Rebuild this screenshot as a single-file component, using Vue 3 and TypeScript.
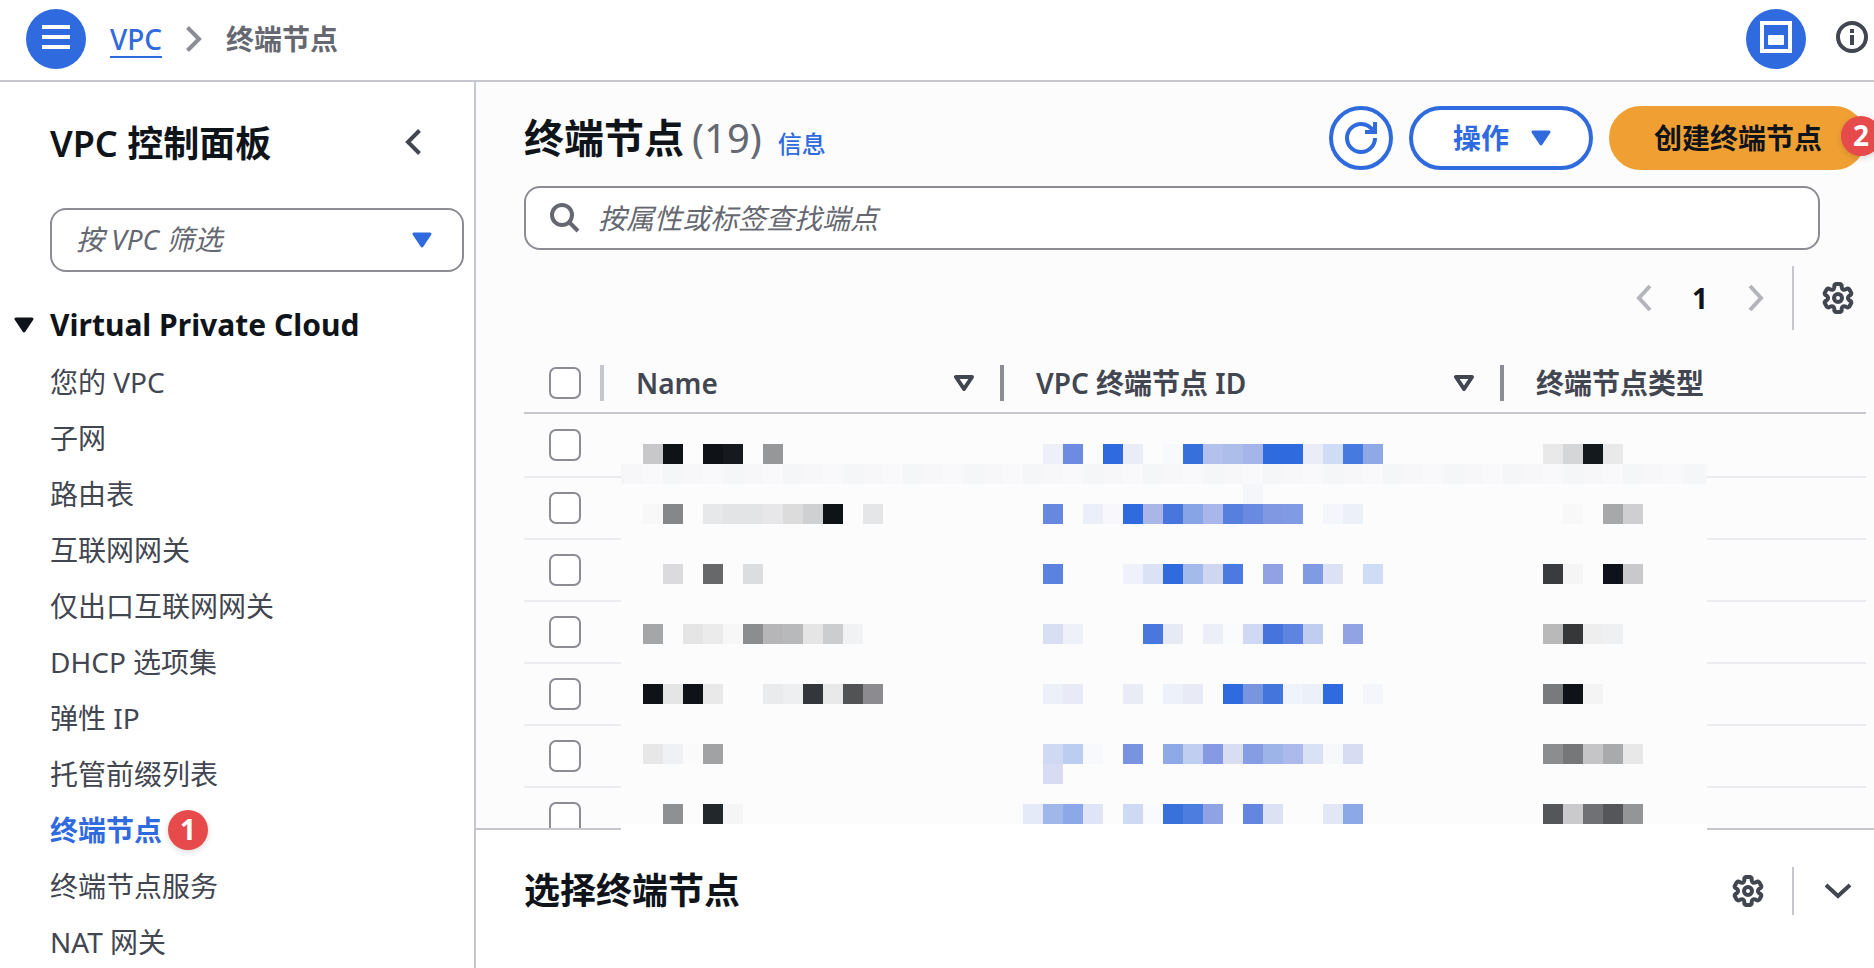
<script setup lang="ts">
import { ref } from 'vue'

interface Block {
  x: number
  y: number
  fill: string
}

const navItems: string[] = [
  '您的 VPC',
  '子网',
  '路由表',
  '互联网网关',
  '仅出口互联网网关',
  'DHCP 选项集',
  '弹性 IP',
  '托管前缀列表',
  '终端节点',
  '终端节点服务',
  'NAT 网关',
]
const activeItem = '终端节点'

const rowCount = 7
const selected = ref<boolean[]>(Array.from({ length: rowCount }, () => false))
const allSelected = ref(false)
const query = ref('')
const vpcFilter = ref('')

// Redacted cell values: [first grid column, grid row, colours ('-' leaves a gap)]
const runs: [number, number, string][] = [
  [0, 0, 'c8c8ca 0f1318 - 0f1318 161a1f - 969799'],
  [0, 3, 'f8f8f8 868788 - e7e8ea e2e4e6 e3e4e6 e7e7e9 dcdcdc cfd0d1 0e1318 - e5e6e8'],
  [1, 6, 'dbdbdd - 676869 - dcddde'],
  [0, 9, 'a5a6a7 - e5e5e5 ebebeb f7f7f7 8c8d8e b6b6b8 b8b9bb e5e5e5 cccdce f1f2f4'],
  [0, 12, '0f1318 e5e5e5 0f1318 e9e9e9 - - eaebed edeff1 33363b e9e9e9 525354 8c8c90'],
  [0, 15, 'e7e7e7 f0f1f4 fafafa a1a2a4'],
  [1, 18, '8f9092 - 22272b f5f5f5'],
  [20, 0, 'edf0f9 6e8be2 - 2f6ade eaedf7 - f7f9fd 376fdb b4c1ec adbeeb a5b5ea 2f6ade 2f6ade eaedf8 cfdcf5 467ade 8fa8e6'],
  [30, 2, 'f4f6fa'],
  [20, 3, '6788df - eaeff9 f8f8fc 2f6ade a9b6e7 4976dc 87a5e6 a9b6e9 567fde 6a8ae1 8098e1 809be4 - f4f6fb ecf0f8'],
  [20, 6, '5c82df - - - eff2fa dce2f5 2f6ade a3baeb cfd7f0 4c7ae0 - 90a2e3 - 809be4 dde1f4 - cfdcf5'],
  [20, 9, 'd9dff2 eef1f9 - - - 4a77dd e6eaf5 - eceef8 fafbfd cfd9f3 4673dc 5d85e0 c0cdef - 91a3e3'],
  [20, 12, 'ecf0f8 e8ebf6 - - e9ebf6 - edf1f9 e8ebf6 - 2f6ade 7a95df 4475dd eff3fc ecf0f8 2f6ade - f5f6fb'],
  [20, 15, 'cfd9f3 bbcdf0 f7f9fd - 7893df - 8fa8e6 c0cff1 8699e3 d9ddf1 859de3 9cb4e8 abbaea d9e1f4 f7f8fc d7dcf3'],
  [20, 16, 'd7dcf3'],
  [19, 18, 'e4eaf7 a0b7ea 8da8e9 dfe5f6 - cedaf3 f8fafd 3871dc 4e7de0 8fa2e4 - 6486df dce1f4 - - e1e7f5 8da8e6'],
  [45, 0, 'e9e9e9 d4d6d8 13191c e9e9e9'],
  [46, 3, 'f8f8f8 - a7a8aa cfcfd1'],
  [45, 6, '3a3b3f f5f5f5 - 0e131b c9c9cb'],
  [45, 9, 'b9b9b9 363738 eeeeee eff0f2'],
  [45, 12, '797a7b 0f1318 f4f4f4'],
  [45, 15, '8c8d8f 767778 c5c5c7 a9aaab e8e8e8'],
  [45, 18, '54565a cacacc 707175 54565a 949596'],
]

const cell = 20
const blocks: Block[] = runs.flatMap(([col, row, colours]) =>
  colours
    .split(' ')
    .map((c, i) => ({ x: 22 + (col + i) * cell, y: 30 + row * cell, fill: c }))
    .filter((b) => b.fill !== '-')
    .map((b) => ({ ...b, fill: '#' + b.fill })),
)

const stripeColours = ['#f9f9fc', '#f5f6f8', '#f7f7f9']
for (let k = -2; k < 54; k++) {
  blocks.push({ x: 22 + k * cell, y: 50, fill: stripeColours[(k + 3) % 3] })
}

// Six-lobed gear outline centred in a 32-unit box
function point(angle: number, radius: number): string {
  const a = (angle * Math.PI) / 180
  return `${(16 + radius * Math.cos(a)).toFixed(2)} ${(16 + radius * Math.sin(a)).toFixed(2)}`
}
const gearPath =
  Array.from({ length: 6 }, (_, i) => {
    const a = -90 + i * 60
    return `${i ? 'L' : 'M'}${point(a - 18, 11.6)}Q${point(a - 17, 14.2)} ${point(a - 8, 14.2)}L${point(a + 8, 14.2)}Q${point(a + 17, 14.2)} ${point(a + 18, 11.6)}Q${point(a + 30, 8.4)} ${point(a + 42, 11.6)}`
  }).join('') + 'Z'
</script>

<template>
  <div class="app">
    <header class="topbar">
      <button class="round" type="button" aria-label="菜单">
        <svg width="28" height="24" viewBox="0 0 28 24" fill="#fff">
          <path d="M0 0h28v4H0zM0 10h28v4H0zM0 20h28v4H0z" />
        </svg>
      </button>
      <nav class="crumbs">
        <a href="#vpc">VPC</a>
        <svg width="16" height="26" viewBox="0 0 16 26" fill="none" stroke="#8c8c94" stroke-width="4">
          <path d="M1.500 1.500L13 13L1.500 24.500" />
        </svg>
        <span>终端节点</span>
      </nav>
      <div class="tools">
        <button class="round" type="button" aria-label="拆分面板">
          <svg width="32" height="32" viewBox="0 0 32 32">
            <rect x="2" y="2" width="28" height="28" fill="none" stroke="#fff" stroke-width="4" />
            <rect x="8" y="14" width="16" height="10" rx="1" fill="#fff" />
          </svg>
        </button>
        <button class="plain about" type="button" aria-label="信息">
          <svg width="32" height="32" viewBox="0 0 32 32">
            <circle cx="16" cy="16" r="14" fill="none" stroke="#424650" stroke-width="4" />
            <path d="M14 8h4v4h-4zM14 14h4v10h-4z" fill="#424650" />
          </svg>
        </button>
      </div>
    </header>

    <div class="body">
      <aside class="sidebar">
        <div class="side-head">
          <h2>VPC 控制面板</h2>
          <button class="plain" type="button" aria-label="收起">
            <svg width="16" height="26" viewBox="0 0 16 26" fill="none" stroke="#424650" stroke-width="4">
              <path d="M14.500 1.500L3 13L14.500 24.500" />
            </svg>
          </button>
        </div>
        <div class="filter">
          <select v-model="vpcFilter" aria-label="按 VPC 筛选">
            <option value="">按 VPC 筛选</option>
          </select>
          <svg class="filter-arrow" width="20" height="16" viewBox="0 0 20 16">
            <path d="M2 2H18L10 14Z" fill="#2f6ade" stroke="#2f6ade" stroke-width="3" stroke-linejoin="round" />
          </svg>
        </div>
        <button class="section" type="button" aria-expanded="true">
          <svg width="20" height="16" viewBox="0 0 20 16">
            <path d="M2 2H18L10 14Z" fill="#0f141a" stroke="#0f141a" stroke-width="3" stroke-linejoin="round" />
          </svg>
          <span>Virtual Private Cloud</span>
        </button>
        <ul class="nav">
          <li v-for="item in navItems" :key="item">
            <a :href="'#' + item" :class="{ active: item === activeItem }">{{ item }}</a>
            <span v-if="item === activeItem" class="badge">1</span>
          </li>
        </ul>
      </aside>

      <main class="workspace">
        <section class="list">
          <div class="title-row">
            <h1>终端节点<span class="count">(19)</span></h1>
            <a class="info" href="#info">信息</a>
            <div class="actions">
              <button class="btn icon-btn" type="button" aria-label="刷新">
                <svg width="32" height="32" viewBox="0 0 32 32" fill="none" stroke="#2f6ade" stroke-width="4">
                  <path d="M30 16A14 14 0 1 1 16 2C22 2 26 5 29 10" />
                  <path d="M30 0V10H20" />
                </svg>
              </button>
              <button class="btn menu-btn" type="button">
                操作
                <svg width="20" height="16" viewBox="0 0 20 16">
                  <path d="M2 2H18L10 14Z" fill="#2f6ade" stroke="#2f6ade" stroke-width="3" stroke-linejoin="round" />
                </svg>
              </button>
              <div class="create-wrap">
                <button class="btn primary" type="button">创建终端节点</button>
                <span class="badge step">2</span>
              </div>
            </div>
          </div>

          <label class="search">
            <svg width="30" height="30" viewBox="0 0 30 30" fill="none" stroke="#656871" stroke-width="4">
              <circle cx="12" cy="12" r="10" />
              <path d="M19 19L28 28" />
            </svg>
            <input v-model="query" type="text" placeholder="按属性或标签查找端点" aria-label="按属性或标签查找端点" />
          </label>

          <div class="pager">
            <button class="plain" type="button" aria-label="上一页">
              <svg width="16" height="28" viewBox="0 0 16 28" fill="none" stroke="#b4b4bb" stroke-width="4">
                <path d="M14 2L3 14L14 26" />
              </svg>
            </button>
            <button class="plain page" type="button">1</button>
            <button class="plain" type="button" aria-label="下一页">
              <svg width="16" height="28" viewBox="0 0 16 28" fill="none" stroke="#b4b4bb" stroke-width="4">
                <path d="M2 2L13 14L2 26" />
              </svg>
            </button>
            <button class="plain gear" type="button" aria-label="首选项">
              <svg width="32" height="32" viewBox="0 0 32 32" fill="none" stroke="#424650" stroke-width="4" stroke-linejoin="round">
                <path :d="gearPath" />
                <circle cx="16" cy="16" r="4" />
              </svg>
            </button>
          </div>

          <table>
            <thead>
              <tr>
                <th class="check" scope="col">
                  <input v-model="allSelected" type="checkbox" aria-label="全选" />
                </th>
                <th class="name" scope="col">
                  <div class="head">
                    Name
                    <svg width="20" height="16" viewBox="0 0 20 16">
                      <path d="M2 2H18L10 14Z" fill="#fcfcfd" stroke="#424650" stroke-width="4" stroke-linejoin="round" />
                    </svg>
                  </div>
                </th>
                <th class="id" scope="col">
                  <div class="head">
                    VPC 终端节点 ID
                    <svg width="20" height="16" viewBox="0 0 20 16">
                      <path d="M2 2H18L10 14Z" fill="#fcfcfd" stroke="#424650" stroke-width="4" stroke-linejoin="round" />
                    </svg>
                  </div>
                </th>
                <th class="type" scope="col"><div class="head">终端节点类型</div></th>
              </tr>
            </thead>
            <tbody>
              <tr v-for="n in rowCount" :key="n">
                <td class="check">
                  <input v-model="selected[n - 1]" type="checkbox" :aria-label="'选择第 ' + n + ' 行'" />
                </td>
                <td></td>
                <td></td>
                <td></td>
              </tr>
            </tbody>
          </table>
        </section>

        <section class="split">
          <h2>选择终端节点</h2>
          <button class="plain" type="button" aria-label="面板首选项">
            <svg width="32" height="32" viewBox="0 0 32 32" fill="none" stroke="#424650" stroke-width="4" stroke-linejoin="round">
              <path :d="gearPath" />
              <circle cx="16" cy="16" r="4" />
            </svg>
          </button>
          <button class="plain expand" type="button" aria-label="展开面板">
            <svg width="28" height="16" viewBox="0 0 28 16" fill="none" stroke="#424650" stroke-width="4">
              <path d="M2 2L14 13L26 2" />
            </svg>
          </button>
        </section>

        <svg class="mosaic" width="1086" height="420" viewBox="0 0 1086 420" shape-rendering="crispEdges" aria-hidden="true">
          <rect width="1086" height="410" fill="#fcfcfd" />
          <rect y="410" width="1086" height="10" fill="#fff" />
          <rect v-for="(b, i) in blocks" :key="i" :x="b.x" :y="b.y" width="20" height="20" :fill="b.fill" />
        </svg>
      </main>
    </div>
  </div>
</template>

<style>
body {
  margin: 0;
  overflow: hidden;
}
</style>

<style scoped>
.app {
  display: flex;
  flex-direction: column;
  height: 100vh;
  overflow: hidden;
  background: #fff;
  color: #0f141a;
  font-family: 'Noto Sans', 'Noto Sans CJK SC', sans-serif;
  font-size: 28px;
  line-height: 40px;
}
* {
  box-sizing: border-box;
}
button,
input,
select {
  margin: 0;
  font: inherit;
  color: inherit;
}
h1,
h2,
ul {
  margin: 0;
  padding: 0;
}
a {
  color: #2f6ade;
  text-decoration: none;
}
svg {
  display: block;
  flex: none;
}
.plain {
  display: flex;
  align-items: center;
  justify-content: center;
  padding: 0;
  border: 0;
  background: none;
}
.round {
  display: flex;
  align-items: center;
  justify-content: center;
  width: 60px;
  height: 60px;
  padding: 0 0 4px;
  border: 0;
  border-radius: 50%;
  background: #2f6ade;
}

.topbar {
  display: flex;
  flex: none;
  align-items: center;
  height: 82px;
  padding: 0 6px 2px 26px;
  border-bottom: 2px solid #c6c6cd;
}
.crumbs {
  display: flex;
  align-items: center;
  gap: 24px;
  margin-left: 24px;
}
.crumbs a {
  height: 38px;
  border-bottom: 2px solid #2f6ade;
  font-weight: 500;
  line-height: 38px;
}
.crumbs span {
  color: #656871;
  font-weight: 700;
}
.tools {
  display: flex;
  align-items: center;
  gap: 30px;
  margin-left: auto;
}
.about {
  padding-bottom: 4px;
}

.body {
  display: flex;
  flex: 1;
  min-height: 0;
}
.sidebar {
  flex: none;
  width: 476px;
  padding: 38px 10px 0 14px;
  border-right: 2px solid #c6c6cd;
  overflow: hidden;
}
.side-head {
  display: flex;
  align-items: center;
  justify-content: space-between;
  height: 48px;
  padding: 0 43px 0 36px;
}
.side-head .plain {
  padding-bottom: 4px;
}
h2 {
  font-size: 36px;
  font-weight: 600;
  line-height: 48px;
}
.filter {
  position: relative;
  margin: 40px 0 0 36px;
}
.filter select {
  display: block;
  width: 100%;
  height: 64px;
  padding: 0 60px 2px 24px;
  border: 2px solid #8c8c94;
  border-radius: 16px;
  background: #fff;
  color: #656871;
  font-style: italic;
  appearance: none;
}
.filter-arrow {
  position: absolute;
  top: 24px;
  right: 32px;
  pointer-events: none;
}
.section {
  display: flex;
  align-items: center;
  gap: 16px;
  margin-top: 32px;
  padding: 0;
  border: 0;
  background: none;
  font-size: 30px;
  font-weight: 700;
  line-height: 42px;
}
.nav {
  margin: 8px 0 0 36px;
  list-style: none;
}
.nav li {
  display: flex;
  align-items: center;
  gap: 6px;
  height: 56px;
}
.nav a {
  color: #424650;
}
.nav a.active {
  color: #2f6ade;
  font-weight: 700;
}
.badge {
  width: 40px;
  height: 40px;
  border-radius: 50%;
  background: #e64a4a;
  box-shadow: 0 2px 6px rgba(0, 0, 0, 0.15);
  color: #fff;
  font-family: 'Noto Sans', sans-serif;
  font-size: 28px;
  font-weight: 700;
  line-height: 38px;
  text-align: center;
}

.workspace {
  position: relative;
  display: flex;
  flex: 1;
  flex-direction: column;
  min-width: 0;
  background: #fcfcfd;
}
.list {
  flex: 1;
  min-height: 0;
  padding: 24px 8px 0 48px;
  overflow: hidden;
}
.title-row {
  display: flex;
  align-items: center;
  height: 64px;
}
h1 {
  font-size: 40px;
  font-weight: 600;
  line-height: 66px;
}
.count {
  margin-left: 8px;
  color: #656871;
  font-weight: 400;
}
.info {
  margin: 12px 0 0 16px;
  font-size: 24px;
  font-weight: 500;
}
.actions {
  display: flex;
  gap: 16px;
  margin-left: auto;
}
.btn {
  display: flex;
  align-items: center;
  justify-content: center;
  height: 64px;
  border: 4px solid #2f6ade;
  border-radius: 32px;
  background: #fff;
  color: #2f6ade;
  font-weight: 700;
}
.icon-btn {
  width: 64px;
  padding: 0;
}
.menu-btn {
  gap: 22px;
  padding: 0 38px 0 40px;
}
.create-wrap {
  position: relative;
}
.primary {
  padding: 0 40px 0 41px;
  border-color: #f0a033;
  background: #f0a033;
  color: #0f141a;
}
.step {
  position: absolute;
  top: 10px;
  right: -15px;
}
.search {
  display: flex;
  align-items: center;
  gap: 18px;
  height: 64px;
  margin: 16px 46px 0 0;
  padding: 0 24px;
  border: 2px solid #8c8c94;
  border-radius: 16px;
  background: #fff;
}
.search input {
  flex: 1;
  min-width: 0;
  padding: 0;
  border: 0;
  outline: 0;
  background: none;
  font-style: italic;
}
.search input::placeholder {
  color: #656871;
  opacity: 1;
}
.pager {
  display: flex;
  align-items: center;
  justify-content: flex-end;
  height: 64px;
  margin-top: 16px;
}
.page {
  width: 96px;
  font-weight: 700;
}
.gear {
  height: 64px;
  margin-left: 28px;
  padding: 0 12px 0 28px;
  border-left: 2px solid #c6c6cd;
}

table {
  width: 100%;
  margin-top: 22px;
  border-collapse: separate;
  border-spacing: 0;
  table-layout: fixed;
}
th,
td {
  height: 62px;
  padding: 0;
  border-bottom: 2px solid #ebebf0;
  text-align: left;
}
th {
  padding-top: 2px;
  border-color: #c6c6cd;
  color: #424650;
  font-weight: 600;
}
tbody tr:first-child td {
  height: 64px;
}
.check {
  width: 80px;
  padding-left: 25px;
}
.name {
  width: 400px;
}
.id {
  width: 500px;
}
.head {
  display: flex;
  align-items: center;
  justify-content: space-between;
  height: 36px;
  padding: 0 26px 0 32px;
  border-right: 4px solid #8c8c94;
}
th.check {
  background: linear-gradient(#c6c6cd, #c6c6cd) right 13px / 4px 36px no-repeat;
}
.type .head {
  border-right: 0;
}
.check input {
  display: block;
  width: 32px;
  height: 32px;
  border: 2px solid #8c8c94;
  border-radius: 7px;
  background: #fff;
  appearance: none;
}
.check input:checked {
  border-color: #2f6ade;
  background: #2f6ade;
}

.split {
  display: flex;
  flex: none;
  align-items: center;
  height: 140px;
  padding: 0 22px 16px 48px;
  border-top: 2px solid #c6c6cd;
  background: #fff;
}
.split h2 {
  margin-right: auto;
}
.expand {
  height: 48px;
  margin-left: 28px;
  padding-left: 30px;
  border-left: 2px solid #c6c6cd;
}
.mosaic {
  position: absolute;
  top: 332px;
  left: 145px;
  pointer-events: none;
}
</style>
